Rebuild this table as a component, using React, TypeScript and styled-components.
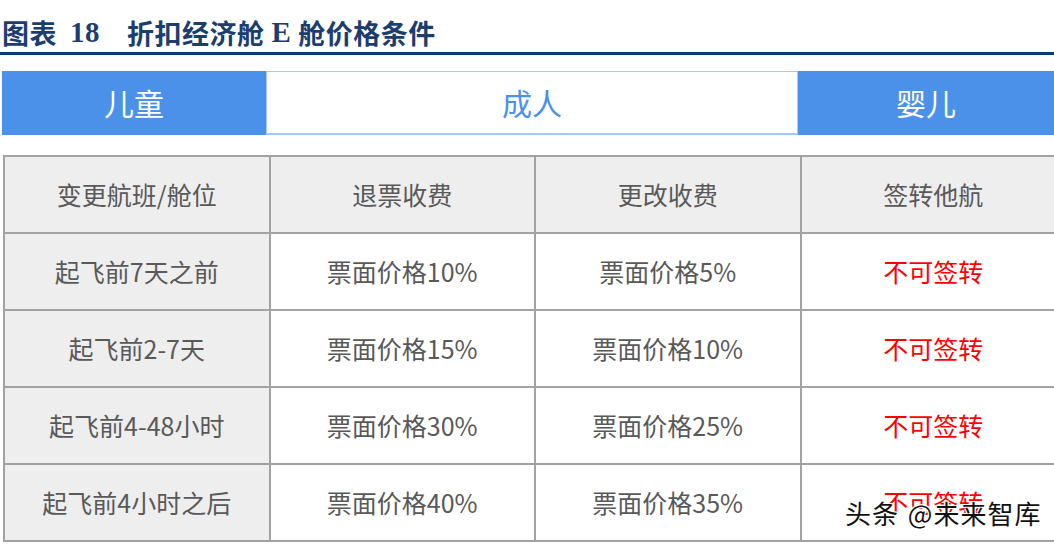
import styled, { createGlobalStyle } from "styled-components";

const GlobalStyle = createGlobalStyle`
  html, body {
    margin: 0;
    padding: 0;
    background: #ffffff;
  }
  body {
    width: 1054px;
    height: 552px;
    overflow: hidden;
    font-family: "Noto Sans CJK SC", "Noto Sans", sans-serif;
  }
`;

const Page = styled.div`
  position: relative;
  width: 1054px;
  height: 552px;
  overflow: hidden;
`;

const TitleRow = styled.div`
  display: flex;
  align-items: center;
  height: 55px;
  padding: 13px 0 0 2px;
  box-sizing: border-box;
  border-bottom: 3px solid #0e3a76;
  color: #1b3d70;
  font-size: 27px;
  letter-spacing: 0.5px;
`;

const TitleCjk = styled.span<{ $gap?: number }>`
  font-family: "Noto Sans CJK SC", sans-serif;
  font-weight: 700;
  margin-right: ${(p) => p.$gap ?? 0}px;
`;

const TitleLatin = styled.span<{ $gap?: number }>`
  font-family: "Liberation Serif", serif;
  font-weight: 700;
  font-size: 29px;
  margin-right: ${(p) => p.$gap ?? 0}px;
`;

const Tabs = styled.div`
  display: grid;
  grid-template-columns: 264px 532px 1fr;
  height: 64px;
  margin: 16px 0 0 2px;
  background: #4b91ea;
`;

const Tab = styled.div<{ $active?: boolean }>`
  display: flex;
  align-items: center;
  justify-content: center;
  font-size: 30px;
  color: ${(p) => (p.$active ? "#4b91ea" : "#ffffff")};
  background: ${(p) => (p.$active ? "#ffffff" : "#4b91ea")};
  border: ${(p) => (p.$active ? "1px solid #a6c8f4" : "none")};
  border-bottom-width: ${(p) => (p.$active ? "2px" : "0")};
  padding-bottom: 2px;
  box-sizing: border-box;
`;

const Table = styled.table`
  margin: 20px 0 0 3px;
  width: 1064px;
  table-layout: fixed;
  border-collapse: collapse;
`;

const Cell = styled.td<{ $shade?: boolean; $red?: boolean }>`
  height: 73px;
  padding: 0 0 2px;
  border: 2px solid #a2a2a2;
  background: ${(p) => (p.$shade ? "#eeeeee" : "#ffffff")};
  color: ${(p) => (p.$red ? "#ff0000" : "#595959")};
  font-size: 25px;
  text-align: center;
  vertical-align: middle;
  white-space: nowrap;
`;

const Watermark = styled.div`
  position: absolute;
  left: 845px;
  top: 494px;
  font-size: 26px;
  color: #111111;
  letter-spacing: 1px;
  word-spacing: 2px;
  text-shadow: -1px -1px 0 #fff, 1px -1px 0 #fff, -1px 1px 0 #fff, 1px 1px 0 #fff;
`;

const header = ["变更航班/舱位", "退票收费", "更改收费", "签转他航"];

const rows = [
  ["起飞前7天之前", "票面价格10%", "票面价格5%", "不可签转"],
  ["起飞前2-7天", "票面价格15%", "票面价格10%", "不可签转"],
  ["起飞前4-48小时", "票面价格30%", "票面价格25%", "不可签转"],
  ["起飞前4小时之后", "票面价格40%", "票面价格35%", "不可签转"],
];

export default function App() {
  return (
    <Page>
      <GlobalStyle />
      <TitleRow>
        <TitleCjk $gap={13}>图表</TitleCjk>
        <TitleLatin $gap={27}>18</TitleLatin>
        <TitleCjk $gap={7}>折扣经济舱</TitleCjk>
        <TitleLatin $gap={7}>E</TitleLatin>
        <TitleCjk>舱价格条件</TitleCjk>
      </TitleRow>
      <Tabs>
        <Tab>儿童</Tab>
        <Tab $active>成人</Tab>
        <Tab>婴儿</Tab>
      </Tabs>
      <Table>
        <tbody>
          <tr>
            {header.map((h) => (
              <Cell key={h} $shade>
                {h}
              </Cell>
            ))}
          </tr>
          {rows.map((r) => (
            <tr key={r[0]}>
              <Cell $shade>{r[0]}</Cell>
              <Cell>{r[1]}</Cell>
              <Cell>{r[2]}</Cell>
              <Cell $red>{r[3]}</Cell>
            </tr>
          ))}
        </tbody>
      </Table>
      <Watermark>头条 @未来智库</Watermark>
    </Page>
  );
}
